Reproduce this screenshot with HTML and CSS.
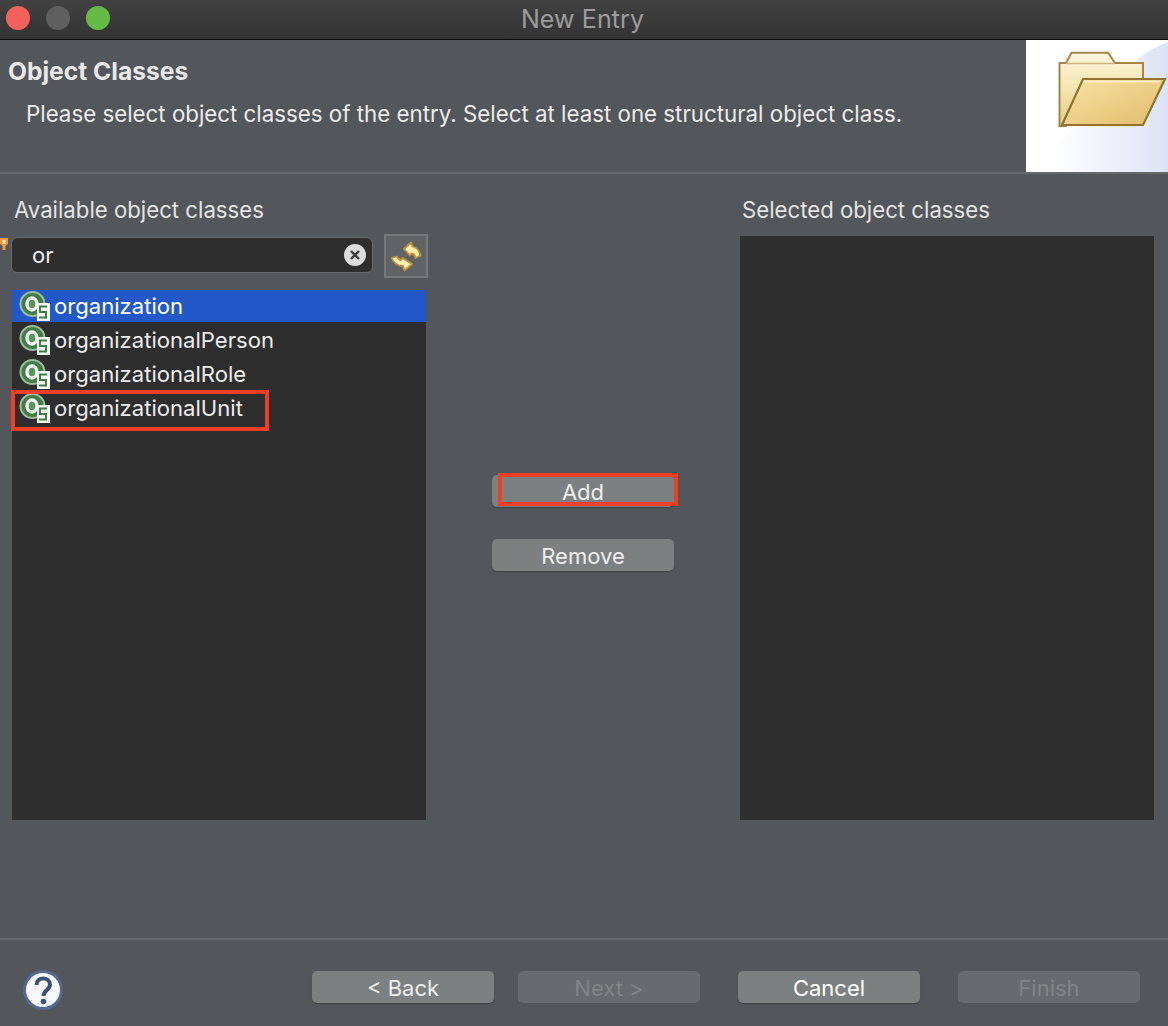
FILE: index.html
```html
<!DOCTYPE html>
<html lang="en">
<head>
<meta charset="utf-8">
<title>New Entry</title>
<link rel="stylesheet" href="styles.css">
</head>
<body>
<svg class="sprites" aria-hidden="true">
  <defs>
    <symbol id="oc" viewBox="0 0 32 32">
      <circle cx="13.500" cy="14" r="12" fill="#3f7d47" stroke="#9dbd9b" stroke-width="2"/>
      <ellipse cx="13" cy="14" rx="5" ry="6" fill="#5c9460" stroke="#f1f6ee" stroke-width="3.400"/>
      <rect x="18" y="13" width="13" height="18" fill="#f4f7f2"/>
      <path d="M28 16.500h-7v5.500h6v5.500h-7" fill="none" stroke="#3f7d47" stroke-width="2"/>
    </symbol>
  </defs>
</svg>
<div class="window">
  <header class="titlebar">
    <div class="lights">
      <span class="light light-red"></span>
      <span class="light light-grey"></span>
      <span class="light light-green"></span>
    </div>
    <div class="window-title">New Entry</div>
  </header>

  <section class="banner">
    <div class="banner-text">
      <h1 class="banner-title">Object Classes</h1>
      <p class="banner-desc">Please select object classes of the entry. Select at least one structural object class.</p>
    </div>
    <svg class="banner-image" viewBox="0 0 142 132" width="142" height="132">
      <defs>
        <linearGradient id="wash" gradientUnits="userSpaceOnUse" x1="26" y1="0" x2="142" y2="0">
          <stop offset="0" stop-color="#ffffff"/>
          <stop offset="1" stop-color="#dde3f6"/>
        </linearGradient>
        <linearGradient id="back" x1="0" y1="0" x2="0" y2="1">
          <stop offset="0" stop-color="#fdf8e0"/>
          <stop offset="0.5" stop-color="#f4e4ae"/>
          <stop offset="1" stop-color="#e6cd88"/>
        </linearGradient>
        <linearGradient id="front" x1="0" y1="0" x2="1" y2="1">
          <stop offset="0" stop-color="#f8e3a6"/>
          <stop offset="1" stop-color="#e2bc6a"/>
        </linearGradient>
      </defs>
      <rect width="142" height="132" fill="#fff"/>
      <path d="M142 2C122 10 108 20 98 34L26 110V132H142Z" fill="url(#wash)"/>
      <path d="M33.500 86V23H40L45.500 12.700H82L89 23H117V40H60L40 86Z" fill="url(#back)" stroke="#a68646" stroke-width="2"/>
      <path d="M40 23.500H89" stroke="#cdb47a" stroke-width="1.500"/>
      <path d="M57 39H139L117 85H36Z" fill="url(#front)" stroke="#94722f" stroke-width="2.200"/>
      <path d="M58 41.500H134" stroke="#fff3cf" stroke-width="1.500"/>
    </svg>
  </section>

  <main class="content">
    <section class="column">
      <h2 class="column-label">Available object classes</h2>
      <div class="filter-row">
        <div class="filter">
          <span class="filter-text">or</span>
          <svg class="clear-icon" viewBox="0 0 22 22" width="22" height="22">
            <circle cx="11" cy="11" r="11" fill="#dcdcdc"/>
            <path d="M7 7L15 15M15 7L7 15" stroke="#3a3a3a" stroke-width="2.400"/>
          </svg>
          <svg class="assist-icon" viewBox="0 0 8 14" width="8" height="14">
            <path d="M0 1H8V7L5.500 9V13H2.500V9L0 7Z" fill="#e89a42"/>
            <rect x="2.500" y="3" width="3" height="4" fill="#ffe6b0"/>
          </svg>
        </div>
        <button class="refresh" type="button" aria-label="Refresh">
          <svg viewBox="0 0 44 44" width="44" height="44">
            <defs>
              <filter id="soft" x="-10%" y="-10%" width="120%" height="120%">
                <feGaussianBlur stdDeviation="0.600"/>
              </filter>
            </defs>
            <g filter="url(#soft)" fill="#fdeeb0" stroke="#c2923a" stroke-width="1.800" stroke-linejoin="round">
              <path d="M20 15L27 8.500L28.500 12.500C32.500 13.500 35.500 17 36.500 21.500L31.500 24C31 21.500 29.500 19.500 27.500 19.500L26 21.500Z"/>
              <path d="M28 30L20.500 36.500L19 32C14 32 9.500 28.500 7.500 24L13 22.500C14 24.500 15 26 17 26L18.500 24Z"/>
            </g>
          </svg>
        </button>
      </div>
      <ul class="class-list">
        <li class="class-row is-selected"><svg class="oc-icon"><use href="#oc"/></svg>organization</li>
        <li class="class-row"><svg class="oc-icon"><use href="#oc"/></svg>organizationalPerson</li>
        <li class="class-row"><svg class="oc-icon"><use href="#oc"/></svg>organizationalRole</li>
        <li class="class-row has-mark"><svg class="oc-icon"><use href="#oc"/></svg>organizationalUnit<span class="mark mark-row"></span></li>
      </ul>
    </section>

    <section class="middle">
      <button class="btn has-mark" type="button">Add<span class="mark mark-btn"></span></button>
      <button class="btn" type="button">Remove</button>
    </section>

    <section class="column">
      <h2 class="column-label column-label-right">Selected object classes</h2>
      <div class="selected-list"></div>
    </section>
  </main>

  <footer class="footer">
    <svg class="help" viewBox="0 0 40 40" width="40" height="40">
      <circle cx="20" cy="20" r="18.500" fill="#f6f8fb" stroke="#55698f" stroke-width="3"/>
      <path d="M13.500 15C13.500 6 27 6.500 27 14.500C27 20 20.500 20 20.500 26" fill="none" stroke="#3d5178" stroke-width="4"/>
      <circle cx="20.500" cy="31.500" r="2.800" fill="#3d5178"/>
    </svg>
    <div class="footer-actions">
      <button class="btn" type="button">&lt; Back</button>
      <button class="btn btn-off" type="button" disabled>Next &gt;</button>
      <button class="btn btn-cancel" type="button">Cancel</button>
      <button class="btn btn-off" type="button" disabled>Finish</button>
    </div>
  </footer>
</div>
</body>
</html>
```
FILE: styles.css
```css
* { box-sizing: border-box; }
html, body { margin: 0; padding: 0; }
body {
  width: 1168px;
  height: 1026px;
  overflow: hidden;
  background: #53565a;
  color: #ececec;
  font-family: Inter, "Liberation Sans", sans-serif;
  font-size: 22px;
}
.sprites { position: absolute; width: 0; height: 0; }
.window { display: flex; flex-direction: column; height: 1026px; }

.titlebar {
  position: relative;
  display: flex;
  align-items: center;
  justify-content: center;
  height: 40px;
  flex: none;
  padding-right: 3px;
  background: linear-gradient(#414141, #333333);
  border-bottom: 1px solid #0c0c0c;
}
.lights {
  position: absolute;
  left: 6px;
  top: 6px;
  display: flex;
  gap: 16px;
}
.light { width: 24px; height: 24px; border-radius: 50%; }
.light-red { background: #f2625a; }
.light-grey { background: #5f5f5f; }
.light-green { background: #64bc47; }
.window-title { color: #9c9c9c; font-size: 25px; line-height: 38px; letter-spacing: 0.1px; margin-top: -2px; }

.banner {
  display: flex;
  justify-content: space-between;
  height: 132px;
  flex: none;
}
.banner-text { padding: 15px 0 0 8px; }
.banner-title { margin: 0; font-size: 24.600px; line-height: 32px; font-weight: 700; color: #e8e8e8; }
.banner-desc { margin: 14px 0 0 18px; font-size: 22.300px; line-height: 26px; color: #ececec; }
.banner-image { display: block; flex: none; }

.content {
  display: flex;
  flex: none;
  height: 766px;
  padding: 24px 14px 0 12px;
  border-top: 2px solid #66696c;
}
.column { width: 414px; flex: none; }
.column-label { margin: 0 0 12px; font-size: 22.200px; line-height: 24px; font-weight: 400; color: #e4e4e4; padding-left: 2px; }
.column-label-right { margin-bottom: 14px; }
.filter-row { display: flex; align-items: center; height: 44px; margin: 0 0 12px -1px; gap: 11px; }
.filter {
  position: relative;
  display: flex;
  flex: none;
  align-items: center;
  justify-content: space-between;
  width: 362px;
  height: 36px;
  margin-top: -2px;
  padding: 0 6px 0 20px;
  background: #2e2e2e;
  border: 1px solid #696c6e;
  border-radius: 6px;
}
.filter-text { font-size: 22px; color: #f0f0f0; }
.clear-icon { display: block; }
.assist-icon { position: absolute; left: -12px; top: -1px; }
.refresh {
  display: block;
  flex: none;
  width: 44px;
  height: 44px;
  padding: 0;
  background: #606365;
  border: 0;
  box-shadow: inset 0 0 0 2px #767979;
}
.refresh svg { display: block; }

.class-list { margin: 0; padding: 0; list-style: none; height: 530px; background: #2e2e2e; }
.class-row {
  position: relative;
  display: flex;
  align-items: center;
  height: 32px;
  margin-bottom: 2px;
  padding-left: 7px;
  font-size: 22.100px;
  color: #ededed;
}
.class-row.is-selected { background: #2358c9; color: #fff; }
.oc-icon { width: 32px; height: 32px; flex: none; margin: 0 3px 0 0; position: relative; }
.mark { position: absolute; border: 4px solid #ee3f22; pointer-events: none; }
.mark-row { left: -1px; top: -2px; width: 258px; height: 41px; }
.mark-btn { left: 6px; top: -2px; width: 180px; height: 33px; }

.middle {
  flex: 1;
  display: flex;
  flex-direction: column;
  align-items: center;
  gap: 32px;
  padding-top: 277px;
}
.selected-list { height: 584px; background: #2e2e2e; }

.btn {
  position: relative;
  width: 182px;
  height: 32px;
  padding: 2px 0 0;
  font-family: inherit;
  font-size: 22px;
  line-height: 30px;
  color: #eeeeee;
  background: #7d8080;
  border: 0;
  border-radius: 5px;
  box-shadow: 0 1px 1px rgba(0, 0, 0, 0.25);
}
.btn-off { background: #686b6d; color: #818486; box-shadow: none; }
.btn-cancel { color: #fff; }

.footer {
  display: flex;
  align-items: flex-start;
  justify-content: space-between;
  flex: none;
  height: 88px;
  padding: 31px 28px 0 23px;
  border-top: 2px solid #66696c;
}
.help { display: block; margin-top: -1px; }
.footer-actions { display: flex; }
.footer-actions .btn:nth-child(2) { margin-left: 24px; }
.footer-actions .btn:nth-child(3), .footer-actions .btn:nth-child(4) { margin-left: 38px; }
```
